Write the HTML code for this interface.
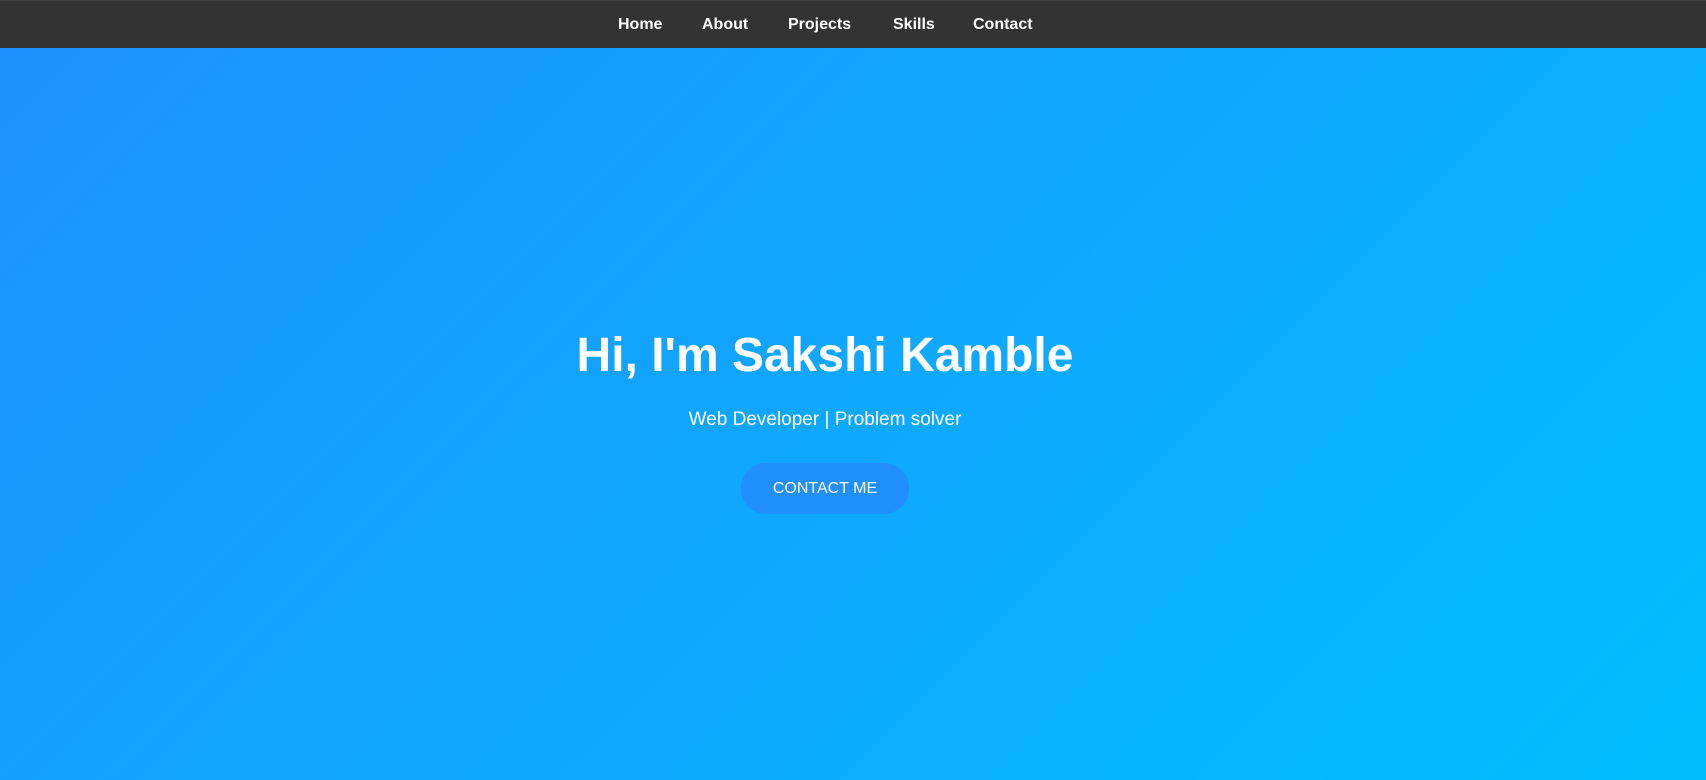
<!DOCTYPE html>
<html><head><meta charset="utf-8"><style>
*{margin:0;padding:0;box-sizing:border-box}
html,body{width:1706px;height:780px;overflow:hidden;font-family:"Liberation Sans",Arial,sans-serif}
body{background:linear-gradient(135deg,#1e90ff,#00bfff)}
nav{position:absolute;top:0;left:0;width:1706px;height:48px;background:#333;border-top:1px solid #444}
nav a{position:absolute;top:15px;color:#fff;font-weight:bold;font-size:16px;text-decoration:none;line-height:18px}
h1{position:absolute;top:326px;left:0;width:1650px;text-align:center;color:#fff;font-size:48px;line-height:60px;font-weight:bold}
p{position:absolute;top:408px;left:0;width:1650px;text-align:center;color:#fff;font-size:19px;line-height:24px}
.btn{position:absolute;left:741px;top:463px;width:168px;height:51px;border-radius:25px;background:#228ffe;color:#fff;font-size:16px;line-height:51px;text-align:center}
</style></head><body>
<nav>
<a style="left:618px">Home</a>
<a style="left:702px">About</a>
<a style="left:788px">Projects</a>
<a style="left:893px">Skills</a>
<a style="left:973px">Contact</a>
</nav>
<h1>Hi, I'm Sakshi Kamble</h1>
<p>Web Developer | Problem solver</p>
<div class="btn">CONTACT ME</div>
</body></html>
